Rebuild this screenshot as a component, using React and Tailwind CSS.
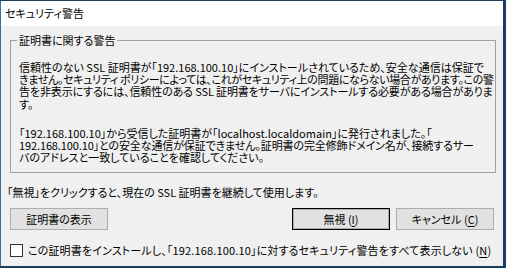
import React from "react";

const font = {
  fontFamily: '"Noto Sans CJK JP", "Noto Sans", sans-serif',
};

function Mn({ children }) {
  return <span className="underline underline-offset-2">{children}</span>;
}

function Btn({ children, def }) {
  return (
    <button
      className={
        "w-[98px] h-[22px] flex items-center justify-center text-[11px] leading-none text-black bg-[#e1e1e1] " +
        (def ? "border border-black shadow-[inset_0_0_0_1px_#adadad]" : "border border-[#adadad]")
      }
    >
      {children}
    </button>
  );
}

export default function App() {
  return (
    <div
      className="w-[506px] h-[268px] bg-[#1b3d60] overflow-hidden pt-[1px] [font-feature-settings:'palt']"
      style={font}
    >
      <div className="w-[503px] h-[265px] flex flex-col border-l border-[#3a6e9c]">
        <div className="h-[25px] bg-white flex items-center pl-[4px] text-[11px] text-black">
          セキュリティ警告
        </div>
        <div className="flex-1 bg-[#f0f0f0] flex flex-col text-[11px] text-black">
          <fieldset className="mt-[6px] ml-[9px] mr-[7px] border border-[#a0a0a0] pl-[6px] pr-[4px] pb-[9px] min-w-0">
            <legend className="px-[2px] leading-[16px] text-[11px]">証明書に関する警告</legend>
            <div className="pl-[2px] mt-[13px] leading-[12.2px] whitespace-nowrap">
              <div>信頼性のない SSL 証明書が「192.168.100.10」にインストールされているため、安全な通信は保証で</div>
              <div className="tracking-[-0.35px]">きません。セキュリティ ポリシーによっては、これがセキュリティ上の問題にならない場合があります。この警</div>
              <div className="tracking-[-0.12px]">告を非表示にするには、信頼性のある SSL 証明書をサーバにインストールする必要がある場合がありま</div>
              <div>す。</div>
            </div>
            <div className="pl-[2px] mt-[17px] leading-[12.2px] whitespace-nowrap">
              <div>「192.168.100.10」から受信した証明書が「localhost.localdomain」に発行されました。「</div>
              <div className="tracking-[-0.12px]">192.168.100.10」との安全な通信が保証できません。証明書の完全修飾ドメイン名が、接続するサー</div>
              <div>バのアドレスと一致していることを確認してください。</div>
            </div>
          </fieldset>
          <div className="mt-[13px] pl-[6px] leading-[12px] whitespace-nowrap">
            「無視」をクリックすると、現在の SSL 証明書を継続して使用します。
          </div>
          <div className="mt-[10px] flex items-center px-[9px]">
            <Btn>証明書の表示</Btn>
            <div className="flex-1" />
            <div className="flex gap-[6px]">
              <Btn def>
                無視&nbsp;(<Mn>I</Mn>)
              </Btn>
              <Btn>
                キャンセル&nbsp;(<Mn>C</Mn>)
              </Btn>
            </div>
          </div>
          <div className="mt-[14px] flex items-center pl-[9px] whitespace-nowrap">
            <div className="w-[13px] h-[13px] border border-[#333333] bg-white shrink-0" />
            <span className="ml-[5px] leading-[13px] tracking-[0.15px]">
              この証明書をインストールし、「192.168.100.10」に対するセキュリティ警告をすべて表示しない&nbsp;(<Mn>N</Mn>)
            </span>
          </div>
        </div>
      </div>
    </div>
  );
}
